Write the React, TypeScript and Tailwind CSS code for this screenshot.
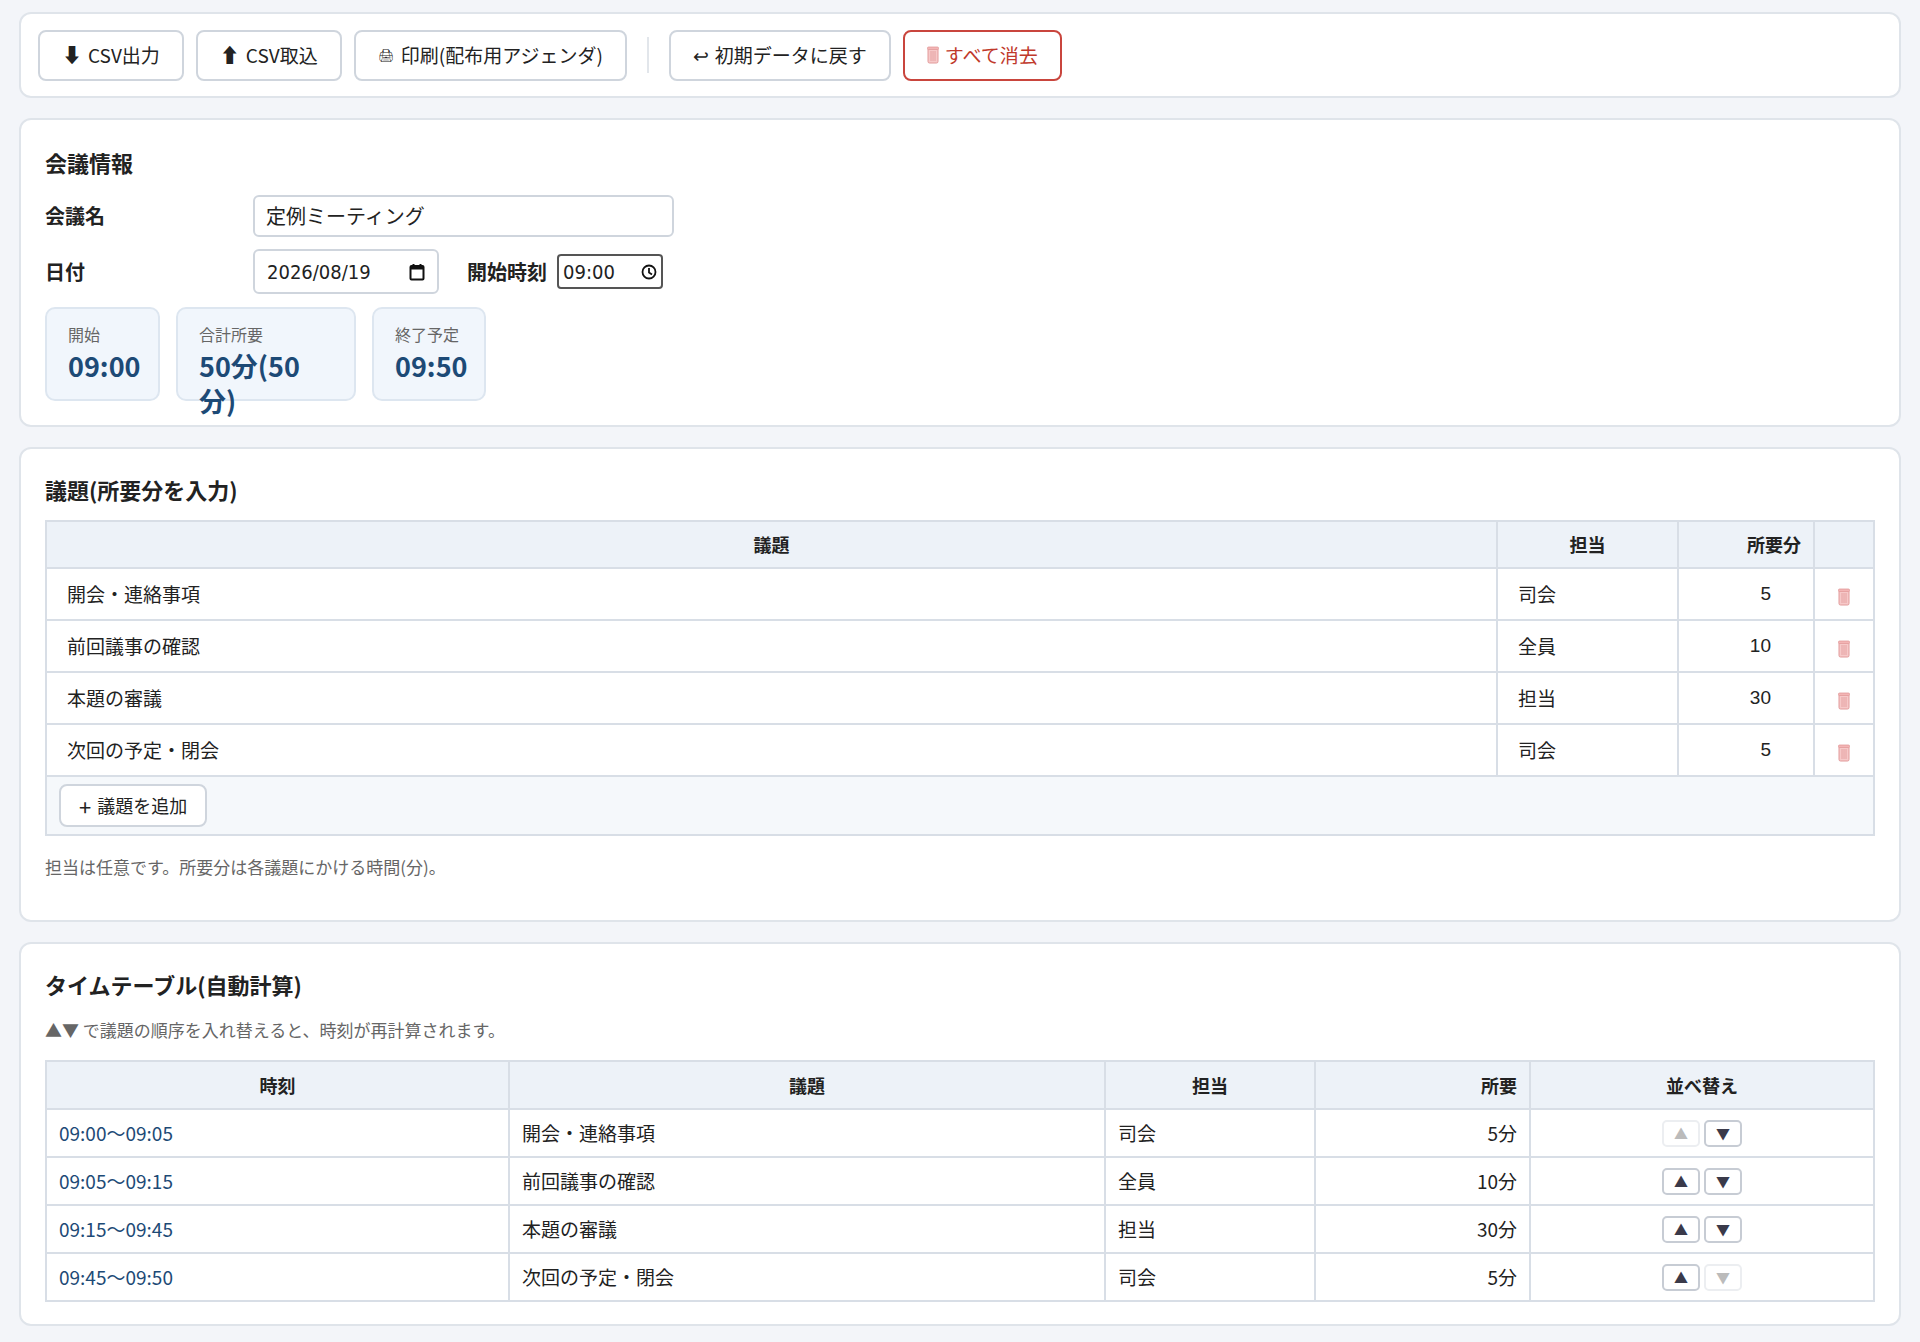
import React from "react";

const items = [
  { t: "開会・連絡事項", o: "司会", m: 5 },
  { t: "前回議事の確認", o: "全員", m: 10 },
  { t: "本題の審議", o: "担当", m: 30 },
  { t: "次回の予定・閉会", o: "司会", m: 5 },
];
const times = ["09:00〜09:05", "09:05〜09:15", "09:15〜09:45", "09:45〜09:50"];

function Trash({ className = "" }: { className?: string }) {
  return (
    <svg width="12" height="18" viewBox="0 0 12 18" className={className}>
      <rect x="1" y="2" width="10" height="15" rx="1.5" fill="#f6c9c9" stroke="#e29a9a" strokeWidth="1" />
      <rect x="0.5" y="1" width="11" height="2.5" rx="1" fill="#f3b5b5" stroke="#e29a9a" strokeWidth="0.8" />
      <line x1="4" y1="5" x2="4" y2="15" stroke="#e29a9a" strokeWidth="0.8" />
      <line x1="6" y1="5" x2="6" y2="15" stroke="#e29a9a" strokeWidth="0.8" />
      <line x1="8" y1="5" x2="8" y2="15" stroke="#e29a9a" strokeWidth="0.8" />
    </svg>
  );
}

const btn = "h-[51px] px-[22px] rounded-[8px] border-2 border-[#cfd5dd] bg-white text-[19px] text-[#222] flex items-center gap-[6px]";

export default function App() {
  return (
    <div className="min-h-[1342px] bg-[#f3f5f9] px-[19px] pt-[12px] pb-[14px] flex flex-col gap-[20px] text-[#222]" style={{ fontFamily: '"Noto Sans CJK JP", "Noto Sans", sans-serif' }}>
      <div className="bg-white border-2 border-[#dfe4ea] rounded-[12px] h-[86px] px-[17px] flex items-center gap-[12px]">
        <button className={btn}><span className="text-[20px]">⬇</span>CSV出力</button>
        <button className={btn}><span className="text-[20px]">⬆</span>CSV取込</button>
        <button className={btn}><span className="text-[13px]">🖨</span>印刷(配布用アジェンダ)</button>
        <div className="w-[2px] h-[36px] bg-[#e2e6eb] mx-[8px]" />
        <button className={btn}><span>↩</span>初期データに戻す</button>
        <button className={btn + " !border-[#c9453d] text-[#c0392b]"}><Trash />すべて消去</button>
      </div>

      <div className="bg-white border-2 border-[#dfe4ea] rounded-[12px] px-[24px] pt-[26px] pb-[24px]">
        <div className="text-[22px] font-bold mb-[16px]">会議情報</div>
        <div className="flex items-center mb-[12px]">
          <div className="w-[208px] text-[20px] font-bold">会議名</div>
          <div className="w-[421px] h-[42px] border-2 border-[#cfd5dd] rounded-[6px] px-[11px] flex items-center text-[20px]">定例ミーティング</div>
        </div>
        <div className="flex items-center mb-[13px]">
          <div className="w-[208px] text-[20px] font-bold">日付</div>
          <div className="w-[186px] h-[45px] border-2 border-[#cfd5dd] rounded-[6px] px-[12px] flex items-center justify-between text-[20px]" style={{ fontFamily: '"DejaVu Sans Condensed", "Liberation Sans", sans-serif' }}>
            <span>2026/08/19</span>
            <svg width="16" height="18" viewBox="0 0 16 18"><rect x="1.5" y="3" width="13" height="13.5" rx="1" fill="none" stroke="#111" strokeWidth="2" /><rect x="1.5" y="3" width="13" height="3.5" fill="#111" /><line x1="4.5" y1="1" x2="4.5" y2="4" stroke="#111" strokeWidth="2" /><line x1="11.5" y1="1" x2="11.5" y2="4" stroke="#111" strokeWidth="2" /></svg>
          </div>
          <div className="ml-[28px] mr-[10px] text-[20px] font-bold">開始時刻</div>
          <div className="w-[106px] h-[35px] border-2 border-[#555] rounded-[4px] px-[4px] flex items-center justify-between text-[20px]" style={{ fontFamily: '"DejaVu Sans Condensed", "Liberation Sans", sans-serif' }}>
            <span>09:00</span>
            <svg width="16" height="16" viewBox="0 0 16 16"><circle cx="8" cy="8" r="6.5" fill="none" stroke="#111" strokeWidth="1.8" /><path d="M8 4v4.5l3 2" fill="none" stroke="#111" strokeWidth="1.8" /></svg>
          </div>
        </div>
        <div className="flex gap-[16px]">
          {[["開始", "09:00", 115], ["合計所要", "50分(50分)", 180], ["終了予定", "09:50", 114]].map(([l, v, w]) => (
            <div key={l as string} className="h-[94px] rounded-[10px] bg-[#f1f6fc] border-2 border-[#dde6f0] px-[21px] pt-[13px]" style={{ width: w as number }}>
              <div className="text-[16px] text-[#666]">{l}</div>
              <div className="text-[27px] font-bold text-[#1d4a76] leading-[1.3] mt-[2px]">{v}</div>
            </div>
          ))}
        </div>
      </div>

      <div className="bg-white border-2 border-[#dfe4ea] rounded-[12px] px-[24px] pt-[24px] pb-[40px]">
        <div className="text-[22px] font-bold mb-[14px]">議題(所要分を入力)</div>
        <table className="w-full border-collapse border-2 border-[#d8dee6] text-[19px]">
          <thead>
            <tr className="bg-[#edf2f8] h-[47px] text-[18px] font-bold">
              <th className="border-2 border-[#d8dee6]">議題</th>
              <th className="border-2 border-[#d8dee6] w-[181px]">担当</th>
              <th className="border-2 border-[#d8dee6] w-[136px] text-right pr-[12px]">所要分</th>
              <th className="border-2 border-[#d8dee6] w-[60px]"></th>
            </tr>
          </thead>
          <tbody>
            {items.map((it) => (
              <tr key={it.t} className="h-[52px]">
                <td className="border-2 border-[#d8dee6] px-[20px]">{it.t}</td>
                <td className="border-2 border-[#d8dee6] px-[20px]">{it.o}</td>
                <td className="border-2 border-[#d8dee6] text-right pr-[42px]" style={{ fontFamily: '"Liberation Sans", sans-serif' }}>{it.m}</td>
                <td className="border-2 border-[#d8dee6] text-center"><Trash className="inline-block" /></td>
              </tr>
            ))}
            <tr className="bg-[#f5f8fb] h-[59px]">
              <td colSpan={4} className="px-[12px]">
                <button className="h-[43px] px-[18px] rounded-[8px] border-2 border-[#cfd5dd] bg-white text-[18px] flex items-center gap-[6px]"><span className="text-[22px] leading-none">+</span>議題を追加</button>
              </td>
            </tr>
          </tbody>
        </table>
        <div className="text-[17px] text-[#666] mt-[18px]">担当は任意です。所要分は各議題にかける時間(分)。</div>
      </div>

      <div className="bg-white border-2 border-[#dfe4ea] rounded-[12px] px-[24px] pt-[24px] pb-[22px]">
        <div className="text-[22px] font-bold mb-[16px]">タイムテーブル(自動計算)</div>
        <div className="text-[17px] text-[#666] mb-[18px]">▲▼ で議題の順序を入れ替えると、時刻が再計算されます。</div>
        <table className="w-full border-collapse border-2 border-[#d8dee6] text-[19px]">
          <thead>
            <tr className="bg-[#edf2f8] h-[48px] text-[18px] font-bold">
              <th className="border-2 border-[#d8dee6] w-[463px]">時刻</th>
              <th className="border-2 border-[#d8dee6] w-[596px]">議題</th>
              <th className="border-2 border-[#d8dee6] w-[210px]">担当</th>
              <th className="border-2 border-[#d8dee6] w-[215px] text-right pr-[12px]">所要</th>
              <th className="border-2 border-[#d8dee6]">並べ替え</th>
            </tr>
          </thead>
          <tbody>
            {items.map((it, i) => (
              <tr key={it.t} className="h-[48px]">
                <td className="border-2 border-[#d8dee6] px-[12px] text-[#1d4a76]">{times[i]}</td>
                <td className="border-2 border-[#d8dee6] px-[12px]">{it.t}</td>
                <td className="border-2 border-[#d8dee6] px-[12px]">{it.o}</td>
                <td className="border-2 border-[#d8dee6] px-[12px] text-right">{it.m}分</td>
                <td className="border-2 border-[#d8dee6]">
                  <div className="flex justify-center gap-[4px]">
                    <span className={"w-[38px] h-[27px] rounded-[5px] border-2 flex items-center justify-center text-[14px] " + (i === 0 ? "border-[#eceef1] text-[#bbb]" : "border-[#c7ccd4] text-[#3a3a4a]")}>▲</span>
                    <span className={"w-[38px] h-[27px] rounded-[5px] border-2 flex items-center justify-center text-[14px] " + (i === 3 ? "border-[#eceef1] text-[#bbb]" : "border-[#c7ccd4] text-[#3a3a4a]")}>▼</span>
                  </div>
                </td>
              </tr>
            ))}
          </tbody>
        </table>
      </div>
    </div>
  );
}
